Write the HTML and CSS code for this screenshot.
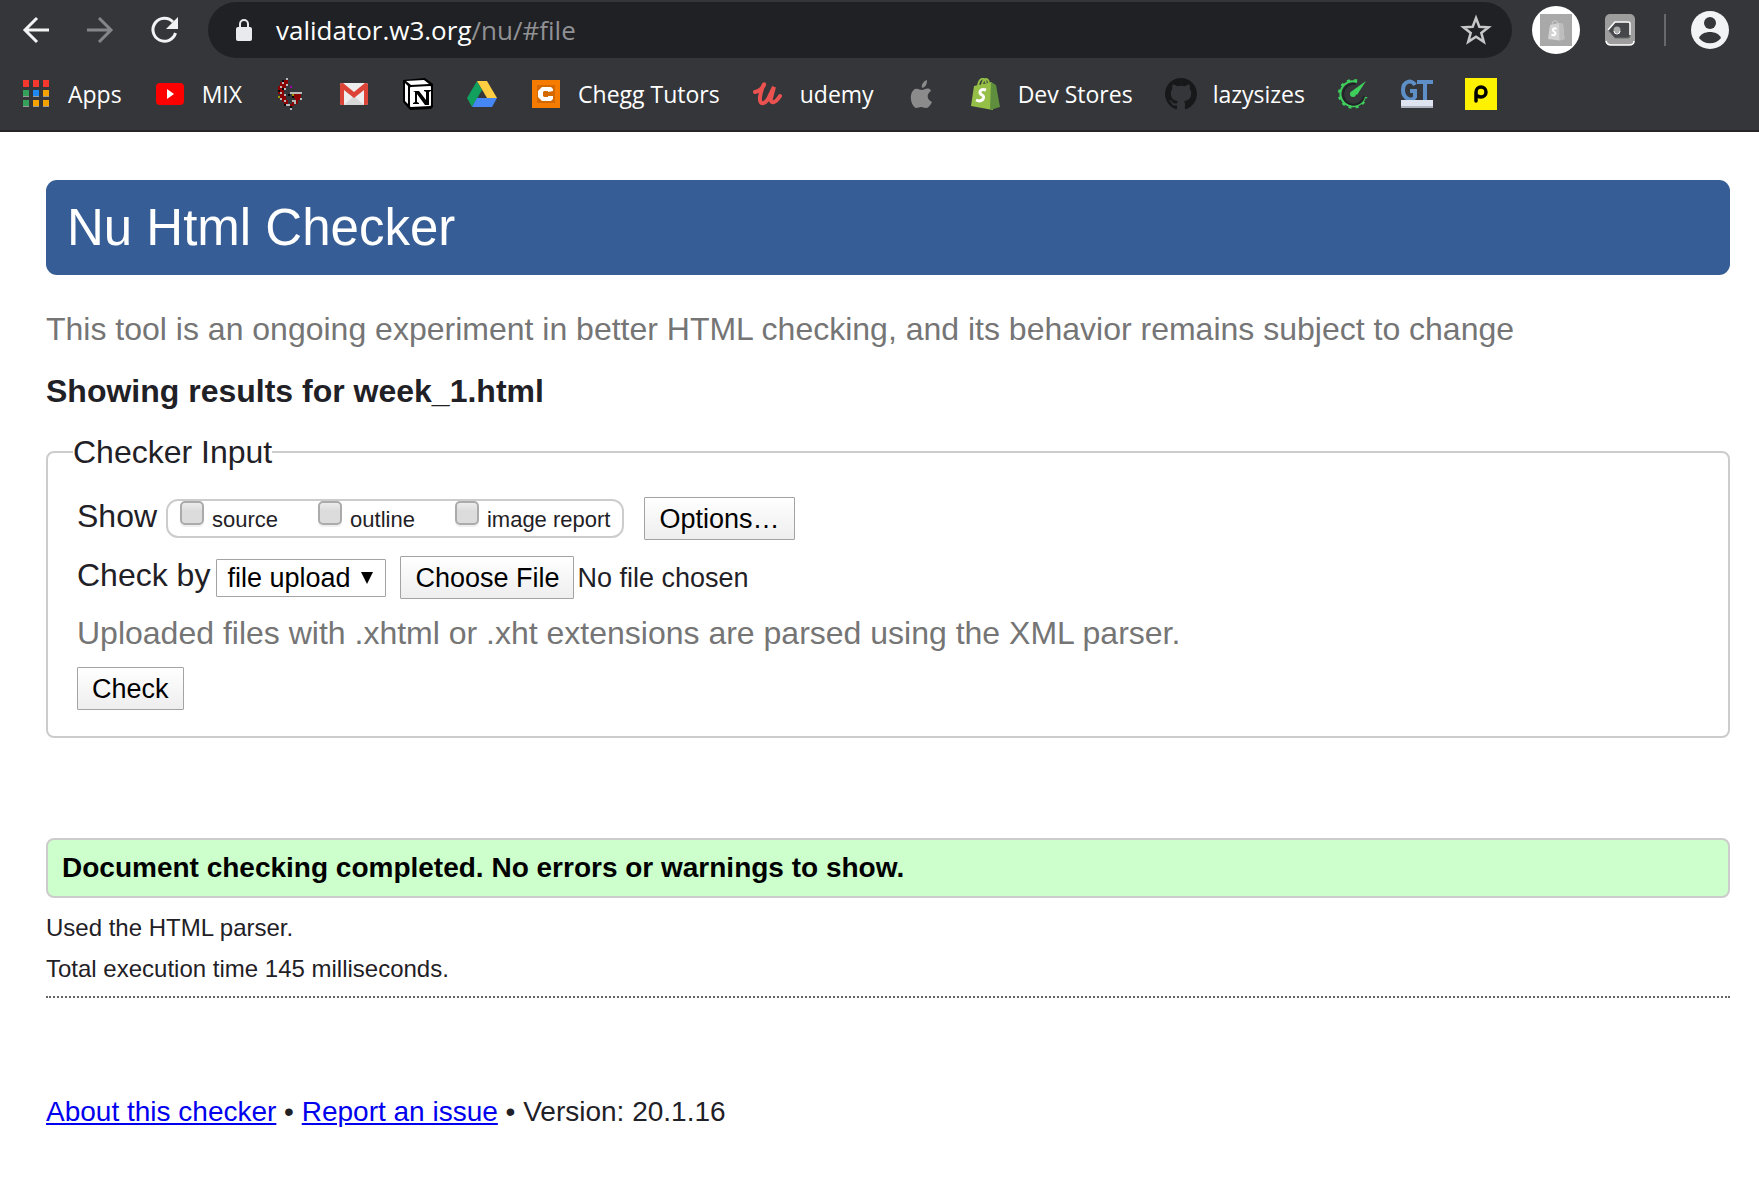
FILE: index.html
```html
<!DOCTYPE html>
<html lang="en">
<head>
<meta charset="utf-8">
<title>Nu Html Checker</title>
<link rel="stylesheet" href="styles.css">
</head>
<body>
<header class="browser">
  <div class="toolbar">
    <div class="nav">
      <button class="icon-button" type="button" aria-label="Back"><svg width="32" height="32" viewBox="0 0 32 32" fill="none" stroke="#f1f3f4" stroke-width="3"><path d="M29 16H5M17 4 5 16l12 12"/></svg></button>
      <button class="icon-button" type="button" aria-label="Forward"><svg width="32" height="32" viewBox="0 0 32 32" fill="none" stroke="#85868a" stroke-width="3"><path d="M3 16h24M15 4l12 12-12 12"/></svg></button>
      <button class="icon-button" type="button" aria-label="Reload"><svg width="32" height="32" viewBox="0 0 32 32"><path d="M27.500 19A11.500 11.500 0 1 1 25 8" fill="none" stroke="#f1f3f4" stroke-width="3"/><path d="M30 3v12H18z" fill="#f1f3f4"/></svg></button>
    </div>
    <div class="omnibox">
      <svg width="18" height="24" viewBox="0 0 18 24"><rect x="1" y="9" width="16" height="14" rx="2" fill="#e8eaed"/><path d="M5 10V6a4 4 0 0 1 8 0v4" fill="none" stroke="#e8eaed" stroke-width="2"/></svg>
      <div class="url">validator.w3.org<span class="path">/nu/#file</span></div>
      <button class="icon-button" type="button" aria-label="Bookmark this page"><svg width="32" height="32" viewBox="0 0 32 32"><path d="m16 4 3.300 8.700 9.200.5-7.200 5.700 2.500 8.900L16 22.700l-7.800 5.100 2.500-8.900-7.200-5.700 9.200-.5z" fill="none" stroke="#c6c7c9" stroke-width="2.500"/></svg></button>
    </div>
    <div class="extensions">
      <button class="icon-button" type="button" aria-label="Shopify extension"><svg width="48" height="48" viewBox="0 0 48 48"><circle cx="24" cy="24" r="24" fill="#fff"/><path d="M8 8h32v32H8z" fill="#a9a9a9"/><path d="m18 19 9-2 4 1 1.500 15-5 1.500L16 33z" fill="#d2d2d2"/><path d="m27 17 4 1 1.500 15-5 1.500z" fill="#bdbdbd"/><path d="M20 19c0-5 5-6 6-1" fill="none" stroke="#d2d2d2"/><path d="M24.500 23c-3-2-5 1-2.500 2.500s1.500 5-2.500 3" fill="none" stroke="#fff" stroke-width="2"/></svg></button>
      <button class="icon-button" type="button" aria-label="Tag extension"><svg width="32" height="32" viewBox="0 0 32 32"><rect x="1" y="0" width="30" height="31" rx="5" fill="#9d9d9d"/><path d="M2 27q1 4 5 4h18q5 0 5-4" fill="none" stroke="#fff" stroke-width="1.500"/><path d="M4 16 11 8h13q2 0 2 2v12q0 2-2 2H11z" fill="#46474a" stroke="#6c6c6c"/><path d="m4 16 7-8h13q2 0 2 2v11" fill="none" stroke="#fff" stroke-width="1.500"/><circle cx="13" cy="16" r="3.500" fill="#aaa"/><path d="M10 17a3 3 0 0 0 6 0" fill="none" stroke="#fff"/></svg></button>
      <span class="separator"></span>
      <button class="icon-button" type="button" aria-label="Profile"><svg width="38" height="38" viewBox="0 0 38 38"><circle cx="19" cy="19" r="19" fill="#f1f3f4"/><circle cx="19" cy="12" r="6" fill="#35363a"/><path d="M8 27c3-8 19-8 22 0-5 7-17 7-22 0z" fill="#35363a"/></svg></button>
    </div>
  </div>
  <nav class="bookmarks" aria-label="Bookmarks">
    <a href="#apps"><svg viewBox="0 0 32 32"><path d="M3 2h6v7H3zm10 0h6v7h-6zm10 0h6v7h-6z" fill="#f7382e"/><path d="M3 12h6v7H3zm0 10h6v7H3z" fill="#34a05a"/><path d="M13 12h6v7h-6z" fill="#1e88f5"/><path d="M23 12h6v7h-6zM13 22h6v7h-6zm10 0h6v7h-6z" fill="#f4a300"/><path d="M3 18h6v1H3zm10 0h6v1h-6zm10 0h6v1h-6zM3 28h6v1H3zm10 0h6v1h-6zm10 0h6v1h-6z" fill="#9a9a9a"/></svg>Apps</a>
    <a href="#mix"><svg viewBox="0 0 32 32"><rect x="2" y="5" width="28" height="22" rx="4" fill="#f00"/><path d="m13 11 7 5-7 5z" fill="#fff"/></svg>MIX</a>
    <a href="#g" aria-label="G"><svg viewBox="0 0 32 32"><path d="M10 2h4v4h-2v5h-2v6h2v5h2v4h4v-4h4v4h-2v2h-6v-2h-4v-2H8v-4H6v-4H4V8h2V4h4zM19 16h8v6h-3v4h-3v-6h-2z" fill="#8b0000"/><path d="M12 0h2v2h-2zM8 4h2v2H8zm4 2h2v2h-2zM6 8h2v2H6zm4 2h2v2h-2zm-4 4h2v2H6zm4 2h2v2h-2zm-4 4h2v2H6zm4 2h2v2h-2zm4 4h2v2h-2zm-2 0h2v2h-2zm4 4h2v2h-2zm0-16h2v2h-2zm2 0h10v2H18zm8 6h2v2h-2zm-6 2h2v4h-2zm-2 0h2v2h-2z" fill="#b9b9b9"/><path d="M8 2h2v2H8zm0 8h2v2H8zm-4 2h2v2H4zm6 14h2v2h-2zm8-8h2v2h-2zm-4-2h2v2h-2zm2 12h2v2h-2z" fill="#080808"/><path d="M16 8h2v2h-2z" fill="#a000a8"/><path d="M4 18h2v2H4zm14-2h2v2h-2z" fill="#999600"/></svg></a>
    <a href="#gmail" aria-label="Gmail"><svg viewBox="0 0 32 32"><rect x="2" y="5" width="28" height="22" rx="2" fill="#eee"/><path d="m6 27 10-9 10 9z" fill="#d8d8d8"/><path d="M2 7q0-2 2-2h1l11 9 11-9h1q2 0 2 2v18q0 2-2 2h-2V12l-10 8-10-8v15H4q-2 0-2-2z" fill="#dc4437"/></svg></a>
    <a href="#notion" aria-label="Notion"><svg viewBox="0 0 32 32"><path d="m1 2 22-2 8 6v23l-2 2-21 1-7-8z" fill="#000"/><path d="m4 3 18-1 5 4-18 1zM8 10q0-1 1-1l19-1q1 0 1 1v18q0 1-1 1L9 29q-1 0-1-1zM3 5l3 3v18l-3-3z" fill="#fff"/><path d="M11 13h6l7 9v-8l-2-1v-1h7v1l-2 1v13h-4l-8-11v8l2 1v1h-6v-1l2-1V14l-2-1z" fill="#000"/></svg></a>
    <a href="#drive" aria-label="Drive"><svg viewBox="0 0 32 32"><path d="M11 3 1 20l5 9 10-17z" fill="#11a05d"/><path d="M11 3h10l10 17H21z" fill="#ffce43"/><path d="M11 20h20l-5 9H6z" fill="#4587f4"/></svg></a>
    <a href="#chegg"><svg viewBox="0 0 32 32"><path d="M2 2h28v28H2z" fill="#f57c00"/><path d="M7 7h18v18H7z" fill="#d66800"/><path d="M23 13v-2l-2-2h-9l-4 4v6l4 4h9l2-2v-3h-5v1h-4l-1-1v-4l1-1h4v1z" fill="#fff"/></svg>Chegg Tutors</a>
    <a href="#udemy"><svg viewBox="0 0 32 32" fill="none" stroke="#eb524f" stroke-width="4" stroke-linecap="round"><path d="M3 14c5-1 8-5 9-7 1-3-3 4-4 12-1 9 6 8 10-2l4-8-3 11c-1 6 4 6 9-2"/></svg>udemy</a>
    <a href="#apple" aria-label="Apple"><svg viewBox="0 0 32 32" fill="#8b8b8b"><path d="M25 13c-5 3-4 9 1 11-2 4-4 6-6 6s-3-1-5-1-3 1-5 1C5 28 2 15 9 11c3-1 5 1 7 1s7-4 9 1zM16 10c-1-4 2-7 5-8 0 4-1 7-5 8z"/></svg></a>
    <a href="#stores"><svg viewBox="0 0 32 32"><path d="m4 8 18-4 1 28-22-4z" fill="#95bf47"/><path d="m21 4 5 3 4 22-10 3z" fill="#5e8e3e"/><path d="M8 8c1-8 7-10 8-3M12 7c1-7 6-8 7-2" fill="none" stroke="#95bf47" stroke-width="2"/><path d="M16 12c-6-2-8 3-4 5s0 8-6 5" fill="none" stroke="#fff" stroke-width="3"/></svg>Dev Stores</a>
    <a href="#lazysizes"><svg viewBox="0 0 16 16"><path fill="#17181a" d="M8 0C3.580 0 0 3.580 0 8c0 3.540 2.290 6.530 5.470 7.590.4.070.55-.17.55-.38 0-.19-.01-.82-.01-1.490-2.010.37-2.530-.49-2.690-.94-.09-.23-.48-.94-.82-1.130-.28-.15-.68-.52-.01-.53.63-.01 1.080.58 1.230.82.72 1.210 1.870.87 2.330.66.07-.52.28-.87.51-1.070-1.780-.2-3.640-.89-3.640-3.950 0-.87.31-1.590.82-2.150-.08-.2-.36-1.020.08-2.120 0 0 .67-.21 2.200.82.64-.18 1.320-.27 2-.27s1.360.09 2 .27c1.530-1.040 2.200-.82 2.200-.82.44 1.100.16 1.920.08 2.120.51.56.82 1.270.82 2.150 0 3.070-1.870 3.750-3.650 3.950.29.25.54.73.54 1.480 0 1.070-.01 1.930-.01 2.200 0 .21.15.46.55.38A8.010 8.010 0 0 0 16 8c0-4.420-3.580-8-8-8z"/></svg>lazysizes</a>
    <a href="#speed" aria-label="Speed test"><svg viewBox="0 0 32 32"><path d="M20 4A12.500 12.500 0 1 0 28 19" fill="none" stroke="#3fcf5c" stroke-width="2"/><path d="M20 3A13.500 13.500 0 1 0 29 19" fill="none" stroke="#3fcf5c" stroke-width="3" stroke-dasharray="3 4"/><path d="M19 6a10.500 10.500 0 1 0 8 12" fill="none" stroke="#222326" stroke-width="2"/><path d="m29 3-9 14-5-4z" fill="#3fcf5c"/><circle cx="16" cy="16" r="3" fill="#3fcf5c"/></svg></a>
    <a href="#gt" aria-label="GT"><svg viewBox="0 0 32 32"><path d="M14 7C11 1 2 3 2 12s9 12 12 7v-6H9M16 4h16M24 4v18" fill="none" stroke="#5d8fc6" stroke-width="4"/><path d="M0 22h32v8H0z" fill="#dfe5f0"/><path d="M0 28h32v2H0z" fill="#abb4bf"/></svg></a>
    <a href="#p" aria-label="P"><svg viewBox="0 0 32 32"><path d="M0 0h32v32H0z" fill="#fff200"/><path d="M11 23V14a5 5 0 1 1 5 5q-2 0-3-1" fill="none" stroke="#000" stroke-width="3.500" stroke-linecap="round"/></svg></a>
  </nav>
</header>
<main class="page">
  <h1 class="banner">Nu Html Checker</h1>
  <p class="tagline">This tool is an ongoing experiment in better HTML checking, and its behavior remains subject to change</p>
  <h2 class="results-title">Showing results for week_1.html</h2>
  <form>
    <fieldset class="checker">
      <legend>Checker Input</legend>
      <div class="rows">
        <div class="row show-row">
          <span class="row-label">Show</span>
          <div class="show-options">
            <label><input type="checkbox">source</label>
            <label><input type="checkbox">outline</label>
            <label><input type="checkbox">image report</label>
          </div>
          <button class="button options" type="button">Options…</button>
        </div>
        <div class="row check-row">
          <label class="row-label" for="method">Check by</label>
          <div class="select">
            <select id="method"><option>file upload</option></select>
            <svg width="12" height="12" viewBox="0 0 12 12"><path d="M0 0h12L6 12z"/></svg>
          </div>
          <input class="file" type="file" aria-label="File to check">
        </div>
        <p class="hint">Uploaded files with .xhtml or .xht extensions are parsed using the XML parser.</p>
        <div class="row"><button class="button" type="submit">Check</button></div>
      </div>
    </fieldset>
  </form>
  <p class="success">Document checking completed. No errors or warnings to show.</p>
  <div class="details">
    <p>Used the HTML parser.</p>
    <p>Total execution time 145 milliseconds.</p>
  </div>
  <footer class="about"><a href="#about">About this checker</a> • <a href="#issue">Report an issue</a> • Version: 20.1.16</footer>
</main>
</body>
</html>
```

FILE: styles.css
```css
* { box-sizing: border-box; }
body {
  margin: 0;
  background: #fff;
  color: #1f2126;
  font: 32px/36px "Liberation Sans", Arial, sans-serif;
}
h1, h2, p { margin: 0; }
svg { display: block; flex: none; }

/* Browser chrome */
.browser {
  background: #35363a;
  border-bottom: 2px solid #292526;
  color: #fff;
  font-family: "Open Sans", "Noto Sans", sans-serif;
}
.toolbar {
  display: flex;
  align-items: center;
  gap: 20px;
  padding: 2px 30px 0 20px;
}
.icon-button {
  display: block;
  padding: 0;
  border: 0;
  background: none;
}
.nav { display: flex; gap: 32px; padding-right: 8px; }
.omnibox {
  flex: 1;
  display: flex;
  align-items: center;
  height: 56px;
  padding: 0 20px 0 27px;
  border-radius: 28px;
  background: #202124;
}
.url { flex: 1; padding-left: 23px; font-size: 26px; }
.path { color: #909194; }
.extensions { display: flex; align-items: center; gap: 24px; }
.separator { width: 2px; height: 32px; margin: 0 1px 0 4px; background: #67686b; }
.bookmarks {
  display: flex;
  gap: 32px;
  height: 72px;
  align-items: center;
  padding: 0 20px;
}
.bookmarks a {
  display: flex;
  align-items: center;
  gap: 16px;
  color: #fff;
  font-size: 23px;
  line-height: 32px;
  text-decoration: none;
  white-space: nowrap;
}
.bookmarks svg { width: 32px; height: 32px; }

/* Checker page */
.page { padding: 48px 29px 60px 46px; }
.banner {
  padding: 18px 21px;
  border-radius: 11px;
  background: #365d95;
  color: #fff;
  font-size: 51px;
  font-weight: 400;
  line-height: 59px;
}
.tagline { margin-top: 36px; color: #757575; }
.results-title { margin-top: 26px; font-size: 32px; }
.checker {
  margin: 25px 0 0;
  padding: 27px 29px 26px;
  border: 2px solid #ccc;
  border-radius: 8px;
}
.checker legend { margin-left: -4px; padding: 0; }
.rows { display: flex; flex-direction: column; gap: 16px; }
.row { display: flex; align-items: center; }
.row-label { padding-bottom: 6px; }
.show-row { gap: 9px; }
.show-options {
  display: flex;
  gap: 40px;
  height: 39px;
  padding: 0 12px;
  border: 2px solid #ccc;
  border-radius: 12px;
}
.show-options label { display: flex; gap: 8px; font-size: 22px; line-height: 38px; }
.show-options input {
  appearance: none;
  width: 24px;
  height: 24px;
  margin: 0;
  border: 2px solid #ababab;
  border-radius: 5px;
  background: linear-gradient(#ececec, #dcdcdc 40%);
  box-shadow: 0 2px 1px #eee;
}
.button, .file::file-selector-button {
  height: 43px;
  padding: 0 15px;
  border: 1px solid #a3a3a3;
  border-radius: 1px;
  background: linear-gradient(#fff, #eee);
  color: #000;
  font: 27px/40px "Liberation Sans", Arial, sans-serif;
}
.options { margin-left: 11px; }
.check-row { gap: 6px; }
.select { display: grid; align-items: center; }
.select select, .select svg { grid-area: 1 / 1; }
.select svg { justify-self: end; margin-right: 13px; pointer-events: none; }
.select select {
  appearance: none;
  width: 170px;
  height: 38px;
  padding: 0 10px;
  border: 1px solid #a3a3a3;
  border-radius: 1px;
  background: #fff;
  color: #000;
  font: 27px/36px "Liberation Sans", Arial, sans-serif;
}
.file {
  height: 43px;
  margin-left: 8px;
  color: inherit;
  font: 27px/43px "Liberation Sans", Arial, sans-serif;
}
.button, .file::file-selector-button { padding: 0 14px; }
.file::file-selector-button { margin: 0 3px 0 0; }
.hint { color: #757575; }
.success {
  margin-top: 100px;
  padding: 0 14px;
  border: 2px solid #ccc;
  border-radius: 8px;
  background: #cfc;
  color: #000;
  font-size: 28px;
  font-weight: 700;
  line-height: 56px;
}
.details {
  margin-top: 9px;
  padding-bottom: 7px;
  border-bottom: 2px dotted #666;
  font-size: 24px;
  line-height: 41px;
}
.about { margin-top: 98px; font-size: 28px; line-height: 32px; }
.about a { color: #00e; }
```
